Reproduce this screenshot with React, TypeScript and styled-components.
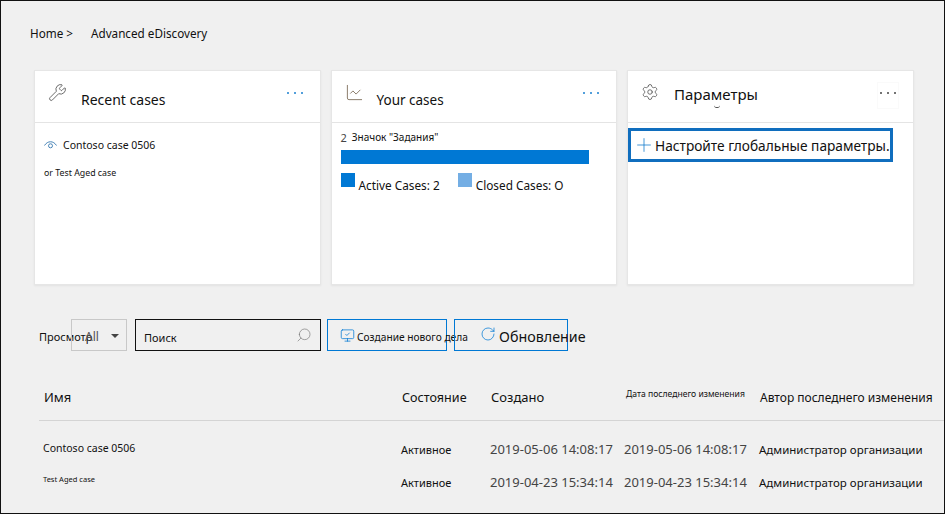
import styled, { createGlobalStyle } from "styled-components";
import { Wrench, LineChart, Settings, Plus, Search, RotateCw, MonitorCheck } from "lucide-react";

const GlobalStyle = createGlobalStyle`
    html, body {
        margin: 0;
        padding: 0;
        background: #f0f0f0;
    }
    body {
        font-family: "Noto Sans", "Open Sans", sans-serif;
        color: #111;
    }
`;

const rows = [
    { name: "Contoso case 0506", small: false, created: "2019-05-06 14:08:17" },
    { name: "Test Aged case", small: true, created: "2019-04-23 15:34:14" },
];

function MoreDots({ $dark }: { $dark?: boolean }) {
    return (
        <Dots $dark={$dark}>
            <i />
            <i />
            <i />
        </Dots>
    );
}

export default function App() {
    return (
        <>
            <GlobalStyle />
            <Page>
                <Breadcrumb>
                    <span>Home &gt;</span>
                    <span>Advanced eDiscovery</span>
                </Breadcrumb>

                <Cards>
                    <Card>
                        <CardHeader>
                            <HeaderIcon>
                                <Wrench size={19} strokeWidth={1.1} color="#555" />
                            </HeaderIcon>
                            <CardTitle $left={13} $top={7} $size={14}>Recent cases</CardTitle>
                            <MoreDots />
                        </CardHeader>
                        <CardBody>
                            <CaseLink>
                                <svg width="13" height="10" viewBox="0 0 13 10" fill="none" stroke="#4a86b8" strokeWidth="1">
                                    <path d="M0.5 5.5C3.5 0.5 9.5 0.5 12.5 5.5" />
                                    <circle cx="6.5" cy="5.8" r="2" />
                                </svg>
                                Contoso case 0506
                            </CaseLink>
                            <SmallCase>or Test Aged case</SmallCase>
                        </CardBody>
                    </Card>

                    <Card>
                        <CardHeader>
                            <HeaderIcon>
                                <LineChart size={19} strokeWidth={1.1} color="#7a6a55" />
                            </HeaderIcon>
                            <CardTitle $left={12} $top={7} $size={13.5}>Your cases</CardTitle>
                            <MoreDots />
                        </CardHeader>
                        <ChartBody>
                            <ChartLabel>
                                <b>2</b>
                                <span>Значок "Задания"</span>
                            </ChartLabel>
                            <Bar />
                            <Legend>
                                <LegendItem>
                                    <Swatch $color="#0078d4" />
                                    <span>Active Cases: 2</span>
                                </LegendItem>
                                <LegendItem>
                                    <Swatch $color="#74aee4" />
                                    <span>Closed Cases: O</span>
                                </LegendItem>
                            </Legend>
                        </ChartBody>
                    </Card>

                    <Card>
                        <CardHeader>
                            <HeaderIcon>
                                <Settings size={18} strokeWidth={1.1} color="#555" />
                            </HeaderIcon>
                            <CardTitle $left={13} $top={1} $size={15}>
                                Параметры
                                <TitleMark />
                            </CardTitle>
                            <DotsFrame>
                                <MoreDots $dark />
                            </DotsFrame>
                        </CardHeader>
                        <SettingsLink>
                            <Plus size={22} strokeWidth={0.8} color="#0070c8" />
                            <span>Настройте глобальные параметры.</span>
                        </SettingsLink>
                    </Card>
                </Cards>

                <Toolbar>
                    <ViewLabel>Просмотр</ViewLabel>
                    <Select>
                        <span>All</span>
                        <Caret />
                    </Select>
                    <SearchBox>
                        <span>Поиск</span>
                        <SearchIcon size={16} strokeWidth={1} color="#777" />
                    </SearchBox>
                    <ActionButton>
                        <MonitorIcon size={15} strokeWidth={1.2} color="#0078d4" />
                        <span>Создание нового дела</span>
                    </ActionButton>
                    <RefreshButton>
                        <RefreshIcon size={16} strokeWidth={1.1} color="#0078d4" />
                        <span>Обновление</span>
                    </RefreshButton>
                </Toolbar>

                <Table>
                    <HeadRow>
                        <HeadCell $size={13}>Имя</HeadCell>
                        <HeadCell $size={12.6}>Состояние</HeadCell>
                        <HeadCell $size={13}>Создано</HeadCell>
                        <HeadCell $size={8.6} $raised>Дата последнего изменения</HeadCell>
                        <HeadCell $size={12}>Автор последнего изменения</HeadCell>
                    </HeadRow>
                    <Rows>
                        {rows.map((row) => (
                            <Row key={row.name}>
                                <NameCell $small={row.small}>{row.name}</NameCell>
                                <StateCell>Активное</StateCell>
                                <DateCell>{row.created}</DateCell>
                                <DateCell>{row.created}</DateCell>
                                <Cell>Администратор организации</Cell>
                            </Row>
                        ))}
                    </Rows>
                </Table>
            </Page>
        </>
    );
}

const Page = styled.div`
    box-sizing: border-box;
    width: 945px;
    height: 514px;
    overflow: hidden;
    border: 1px solid #111;
    background: #f0f0f0;
    padding: 24px 0 0 29px;
`;

const Breadcrumb = styled.div`
    display: flex;
    gap: 18px;
    font-size: 11.7px;
    line-height: 16px;
`;

const Cards = styled.div`
    display: flex;
    gap: 10px;
    margin: 29px 0 0 4px;
`;

const Card = styled.section`
    box-sizing: border-box;
    width: 286.5px;
    height: 215px;
    background: #fff;
    border: 1px solid #e6e6e6;
    box-shadow: 0 1px 2px rgba(0, 0, 0, 0.06);
`;

const CardHeader = styled.header`
    display: flex;
    align-items: flex-start;
    height: 39px;
    padding: 12px 17px 0 13px;
    border-bottom: 1px solid #e4e4e4;
`;

const HeaderIcon = styled.div`
    display: flex;
    width: 20px;
    flex-shrink: 0;
`;

const CardTitle = styled.h2<{ $left: number; $top: number; $size: number }>`
    position: relative;
    flex: 1;
    margin: ${(p) => p.$top}px 0 0 ${(p) => p.$left}px;
    font-size: ${(p) => p.$size}px;
    font-weight: 400;
    line-height: 20px;
`;

const TitleMark = styled.i`
    position: absolute;
    left: 40px;
    top: 21px;
    width: 6px;
    height: 2px;
    border-bottom: 1px solid #444;
    border-radius: 0 0 4px 4px;
`;

const Dots = styled.div<{ $dark?: boolean }>`
    display: flex;
    gap: 5px;
    margin-top: 9px;

    i {
        width: 2px;
        height: 2px;
        border-radius: 50%;
        background: ${(p) => (p.$dark ? "#444" : "#1a7fcf")};
    }
`;

const DotsFrame = styled.div`
    display: flex;
    justify-content: center;
    width: 22px;
    height: 27px;
    margin: -1px -3px 0 0;
    border: 1px solid #fafafa;
    box-sizing: border-box;
`;

const CardBody = styled.div`
    padding: 14px 9px;
`;

const CaseLink = styled.div`
    display: flex;
    align-items: center;
    gap: 6px;
    font-size: 10.5px;
    line-height: 16px;
`;

const SmallCase = styled.div`
    margin-top: 14px;
    font-size: 8.8px;
    line-height: 12px;
`;

const ChartBody = styled.div`
    padding: 7px 9px;
`;

const ChartLabel = styled.div`
    display: flex;
    gap: 5px;
    font-size: 10px;
    line-height: 15px;

    b {
        font-weight: 400;
        font-size: 11px;
        color: #444;
    }
`;

const Bar = styled.div`
    width: 248px;
    height: 14px;
    margin-top: 5px;
    background: #0078d4;
`;

const Legend = styled.div`
    display: flex;
    gap: 18px;
    margin-top: 9px;
`;

const LegendItem = styled.div`
    display: flex;
    gap: 4px;
    font-size: 11.8px;
    line-height: 16px;

    span {
        margin-top: 4px;
    }
`;

const Swatch = styled.i<{ $color: string }>`
    width: 14px;
    height: 14px;
    flex-shrink: 0;
    background: ${(p) => p.$color};
`;

const SettingsLink = styled.div`
    box-sizing: border-box;
    display: flex;
    align-items: center;
    width: 265px;
    height: 34px;
    margin-top: 5px;
    padding-left: 2px;
    border: 3px solid #106ebe;
    font-size: 13.7px;
    white-space: nowrap;

    svg {
        flex-shrink: 0;
    }
`;

const Toolbar = styled.div`
    display: flex;
    margin: 34px 0 0 8px;
    height: 32px;

    & > * {
        flex-shrink: 0;
    }
`;

const ViewLabel = styled.div`
    width: 32px;
    margin-left: 1px;
    font-size: 11px;
    line-height: 36px;
    white-space: nowrap;
`;

const Select = styled.div`
    box-sizing: border-box;
    display: flex;
    align-items: center;
    justify-content: space-between;
    width: 56px;
    height: 32px;
    padding: 2px 7px 0 13px;
    border: 1px solid #c8c8c8;
    font-size: 12px;
    color: #555;
`;

const Caret = styled.i`
    width: 0;
    height: 0;
    border-left: 4px solid transparent;
    border-right: 4px solid transparent;
    border-top: 4px solid #444;
`;

const SearchBox = styled.div`
    box-sizing: border-box;
    display: flex;
    align-items: center;
    justify-content: space-between;
    width: 186px;
    height: 32px;
    margin-left: 8px;
    padding: 4px 8px 0 8px;
    border: 1px solid #111;
    font-size: 11px;
`;

const SearchIcon = styled(Search)`
    transform: scaleX(-1);
    margin-top: -4px;
`;

const ActionButton = styled.div`
    box-sizing: border-box;
    display: flex;
    align-items: center;
    gap: 2px;
    width: 120px;
    height: 32px;
    margin-left: 6px;
    padding: 4px 0 0 12px;
    border: 1px solid #0078d4;
    font-size: 10.2px;
    white-space: nowrap;

    svg {
        flex-shrink: 0;
    }
`;

const MonitorIcon = styled(MonitorCheck)`
    margin-top: -4px;
`;

const RefreshButton = styled(ActionButton)`
    width: 114px;
    margin-left: 7px;
    padding: 2px 0 0 25px;
    gap: 3px;
    font-size: 14.3px;
`;

const RefreshIcon = styled(RotateCw)`
    margin-top: -5px;
`;

const Table = styled.div`
    margin: 22px 0 0 9px;
`;

const HeadRow = styled.div`
    display: grid;
    grid-template-columns: 358px 89px 135px 134px 1fr;
    align-items: center;
    width: 905px;
    height: 48px;
    box-sizing: border-box;
    padding-left: 5px;
    border-bottom: 1px solid #d4d4d4;
`;

const HeadCell = styled.div<{ $size: number; $raised?: boolean }>`
    font-size: ${(p) => p.$size}px;
    white-space: nowrap;
    margin-top: ${(p) => (p.$raised ? -6 : 1)}px;
`;

const Rows = styled.div`
    margin-top: 12px;
`;

const Row = styled.div`
    display: grid;
    grid-template-columns: 358px 89px 134px 135px 1fr;
    align-items: center;
    height: 33px;
    padding-left: 4px;
`;

const Cell = styled.div`
    font-size: 11.5px;
    white-space: nowrap;
`;

const StateCell = styled(Cell)`
    font-size: 11px;
`;

const NameCell = styled(Cell)<{ $small: boolean }>`
    font-size: ${(p) => (p.$small ? 7.5 : 10.5)}px;
    margin-top: ${(p) => (p.$small ? -7 : -3)}px;
`;

const DateCell = styled(Cell)`
    font-size: 13px;
    margin-top: -2px;
    color: #444;
`;
